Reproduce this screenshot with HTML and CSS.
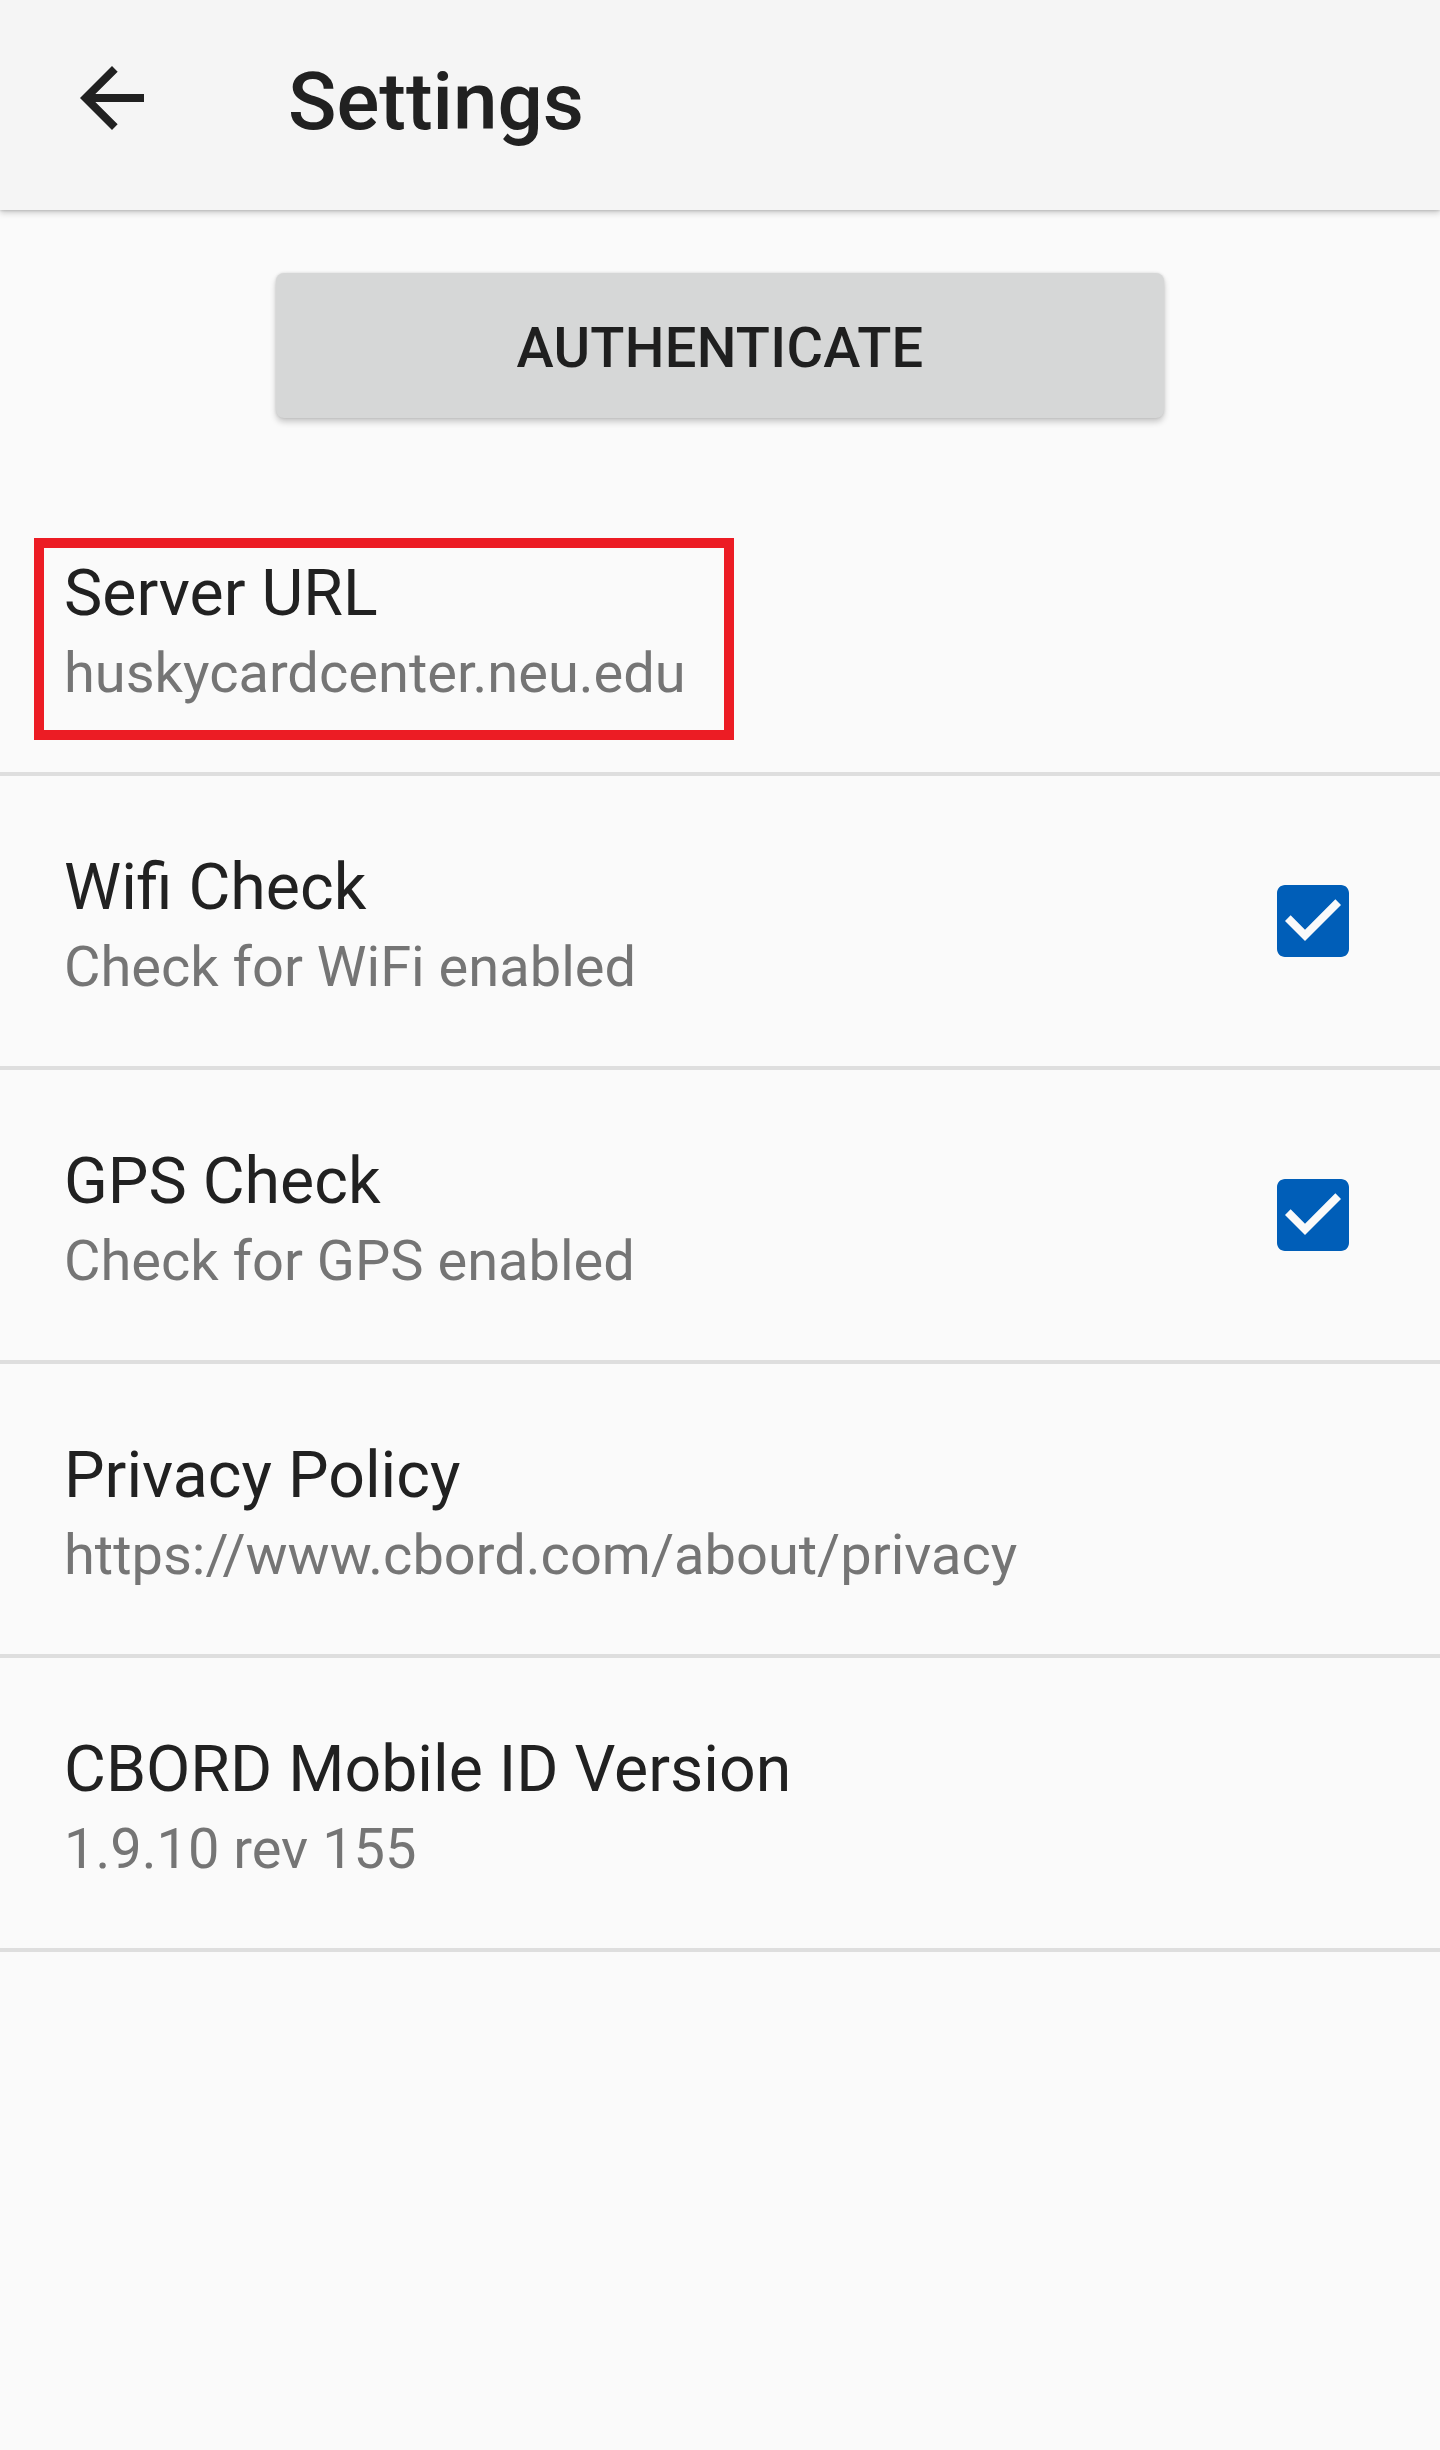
FILE: index.html
```html
<!DOCTYPE html>
<html lang="en">
<head>
<meta charset="utf-8">
<title>Settings</title>
<link rel="stylesheet" href="styles.css">
</head>
<body>
<header class="appbar">
  <svg class="back" viewBox="0 0 24 24" width="96" height="96" aria-hidden="true"><path d="M20 11H7.83l5.59-5.59L12 4l-8 8 8 8 1.41-1.41L7.83 13H20v-2z" fill="#212121"/></svg>
  <h1 class="title">Settings</h1>
</header>
<main class="content">
  <div class="btn-wrap"><button class="auth-btn">Authenticate</button></div>
  <ul class="prefs">
    <li class="pref">
      <div class="pref-text">
        <div class="pref-title">Server URL</div>
        <div class="pref-sub">huskycardcenter.neu.edu</div>
      </div>
      <div class="highlight"></div>
    </li>
    <li class="pref">
      <div class="pref-text">
        <div class="pref-title">Wifi Check</div>
        <div class="pref-sub">Check for WiFi enabled</div>
      </div>
      <svg class="check" viewBox="0 0 24 24" width="96" height="96" aria-hidden="true"><path d="M19 3H5c-1.11 0-2 .9-2 2v14c0 1.1.89 2 2 2h14c1.11 0 2-.9 2-2V5c0-1.1-.89-2-2-2zm-9 14l-5-5 1.41-1.41L10 14.17l7.59-7.59L19 8l-9 9z" fill="#005eb8"/></svg>
    </li>
    <li class="pref">
      <div class="pref-text">
        <div class="pref-title">GPS Check</div>
        <div class="pref-sub">Check for GPS enabled</div>
      </div>
      <svg class="check" viewBox="0 0 24 24" width="96" height="96" aria-hidden="true"><path d="M19 3H5c-1.11 0-2 .9-2 2v14c0 1.1.89 2 2 2h14c1.11 0 2-.9 2-2V5c0-1.1-.89-2-2-2zm-9 14l-5-5 1.41-1.41L10 14.17l7.59-7.59L19 8l-9 9z" fill="#005eb8"/></svg>
    </li>
    <li class="pref">
      <div class="pref-text">
        <div class="pref-title">Privacy Policy</div>
        <div class="pref-sub">https://www.cbord.com/about/privacy</div>
      </div>
    </li>
    <li class="pref">
      <div class="pref-text">
        <div class="pref-title">CBORD Mobile ID Version</div>
        <div class="pref-sub">1.9.10 rev 155</div>
      </div>
    </li>
  </ul>
</main>
</body>
</html>
```
FILE: styles.css
```css
* { box-sizing: border-box; }
html, body {
  margin: 0;
  padding: 0;
  background: #fafafa;
  font-family: Roboto, "Liberation Sans", Arial, sans-serif;
  color: #212121;
}
body { min-height: 2450px; }

.appbar {
  position: relative;
  z-index: 2;
  height: 210px;
  background: #f5f5f5;
  display: flex;
  align-items: flex-start;
  box-shadow: 0 3px 6px rgba(0, 0, 0, 0.18), 0 1px 2px rgba(0, 0, 0, 0.12);
}
.back {
  display: block;
  margin: 50px 0 0 64px;
  flex: none;
}
.title {
  margin: 62px 0 0 128px;
  font-size: 80px;
  line-height: 80px;
  font-weight: 500;
  color: #212121;
}

.content { display: block; }

.btn-wrap {
  display: flex;
  justify-content: center;
  padding-top: 63px;
}
.auth-btn {
  width: 888px;
  height: 145px;
  border: none;
  border-radius: 8px;
  background: #d6d7d7;
  color: #1f1f1f;
  font-family: Roboto, "Liberation Sans", Arial, sans-serif;
  font-size: 56px;
  font-weight: 500;
  text-transform: uppercase;
  letter-spacing: 0.005em;
  padding: 5px 0 0;
  box-shadow: 0 4px 6px rgba(0, 0, 0, 0.2), 0 0 3px rgba(0, 0, 0, 0.12);
}

.prefs {
  list-style: none;
  margin: 64px 0 0;
  padding: 0;
}
.pref {
  position: relative;
  display: flex;
  align-items: center;
  justify-content: space-between;
  border-bottom: 4px solid #dedede;
}
.pref-text {
  padding: 71px 0 59px 64px;
}
.pref-title {
  font-size: 64.4px;
  line-height: 80px;
  color: #212121;
}
.pref-sub {
  font-size: 56px;
  line-height: 80px;
  color: #757575;
}
.check {
  display: block;
  flex: none;
  margin-right: 79px;
}
.highlight {
  position: absolute;
  left: 34px;
  top: 56px;
  width: 700px;
  height: 202px;
  border: 10px solid #ec1c24;
}
```
